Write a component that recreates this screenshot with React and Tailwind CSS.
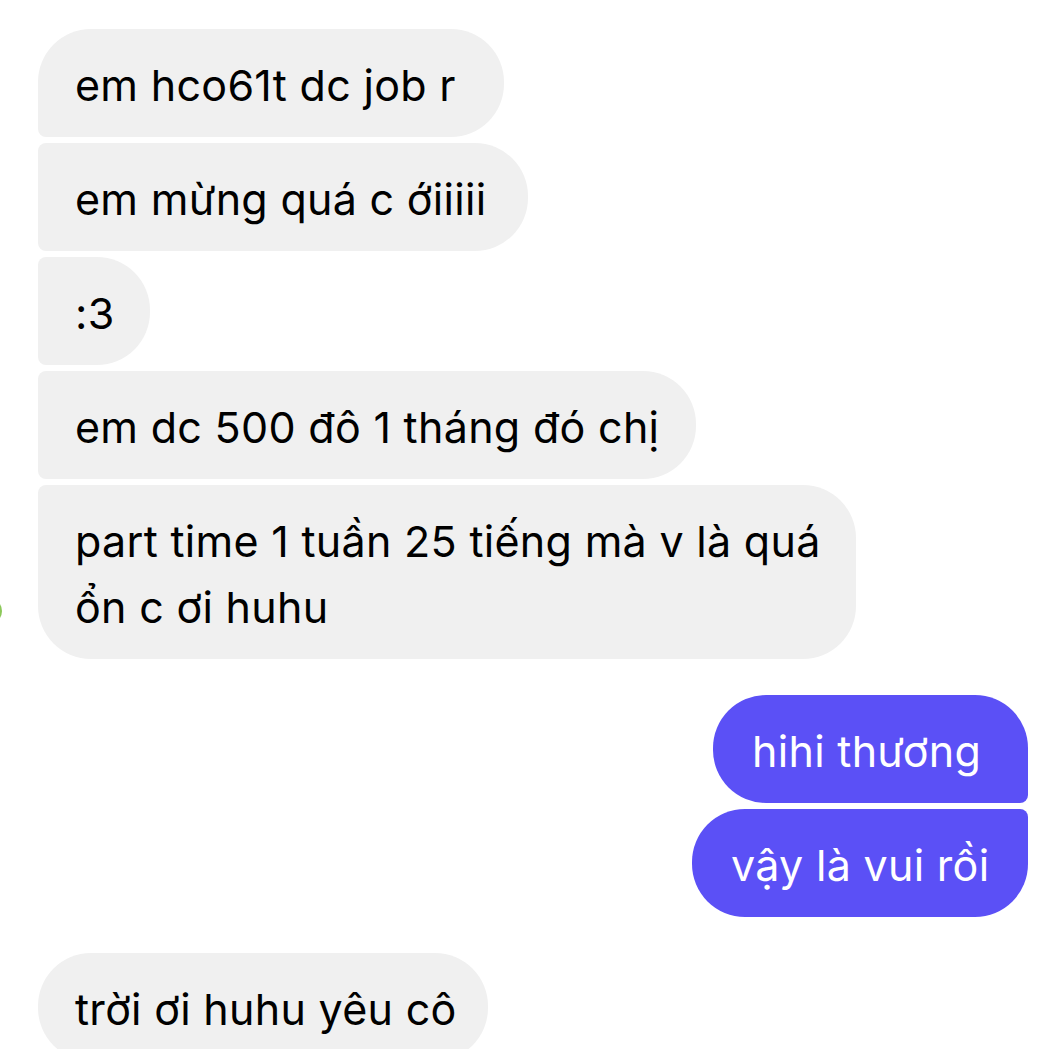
import React from 'react'

const incoming = [
  { text: 'em hco61t dc job r', w: 'w-[466px]', shape: 'rounded-tl-[53px] rounded-bl-[8px]' },
  { text: 'em mừng quá c ớiiiii', w: 'w-[490px]', shape: 'rounded-tl-[8px] rounded-bl-[8px]' },
  { text: ':3', w: 'w-[112px]', shape: 'rounded-tl-[8px] rounded-bl-[8px]' },
  { text: 'em dc 500 đô 1 tháng đó chị', w: 'w-[658px]', shape: 'rounded-tl-[8px] rounded-bl-[8px]' },
]

const Bubble = ({ children, className }) => (
  <div className={`pt-[23px] pb-[19px] pl-[37px] leading-[66px] text-[43px] tracking-[0.3px] ${className}`}>
    {children}
  </div>
)

const App = () => {
  return (
    <div className="h-[1049px] w-full overflow-hidden bg-white font-['Inter','Noto_Sans',sans-serif] text-black">
      <div className="flex flex-col gap-[6px] pt-[29px] pl-[38px] pr-[24px]">
        {incoming.map((m, i) => (
          <Bubble key={i} className={`bg-[#f0f0f0] rounded-r-[53px] ${m.w} ${m.shape}`}>
            {m.text}
          </Bubble>
        ))}

        <div className="relative">
          {/* active status dot peeking in from the edge */}
          <span className="absolute left-[-62px] top-[113px] h-[26px] w-[26px] rounded-full bg-[#8cc85a]" />
          <Bubble className="w-[818px] bg-[#f0f0f0] rounded-r-[53px] rounded-tl-[8px] rounded-bl-[53px]">
            part time 1 tuần 25 tiếng mà v là quá
            <br />
            ổn c ơi huhu
          </Bubble>
        </div>

        <div className="mt-[30px] flex flex-col items-end gap-[6px]">
          <Bubble className="w-[315px] bg-[#5b50f6] text-white rounded-l-[53px] rounded-tr-[53px] rounded-br-[8px] pl-[39px]">
            hihi thương
          </Bubble>
          <Bubble className="w-[336px] bg-[#5b50f6] text-white rounded-l-[53px] rounded-tr-[8px] rounded-br-[53px] pl-[39px]">
            vậy là vui rồi
          </Bubble>
        </div>

        <Bubble className="mt-[30px] w-[450px] bg-[#f0f0f0] rounded-[53px]">
          trời ơi huhu yêu cô
        </Bubble>
      </div>
    </div>
  )
}

export default App
